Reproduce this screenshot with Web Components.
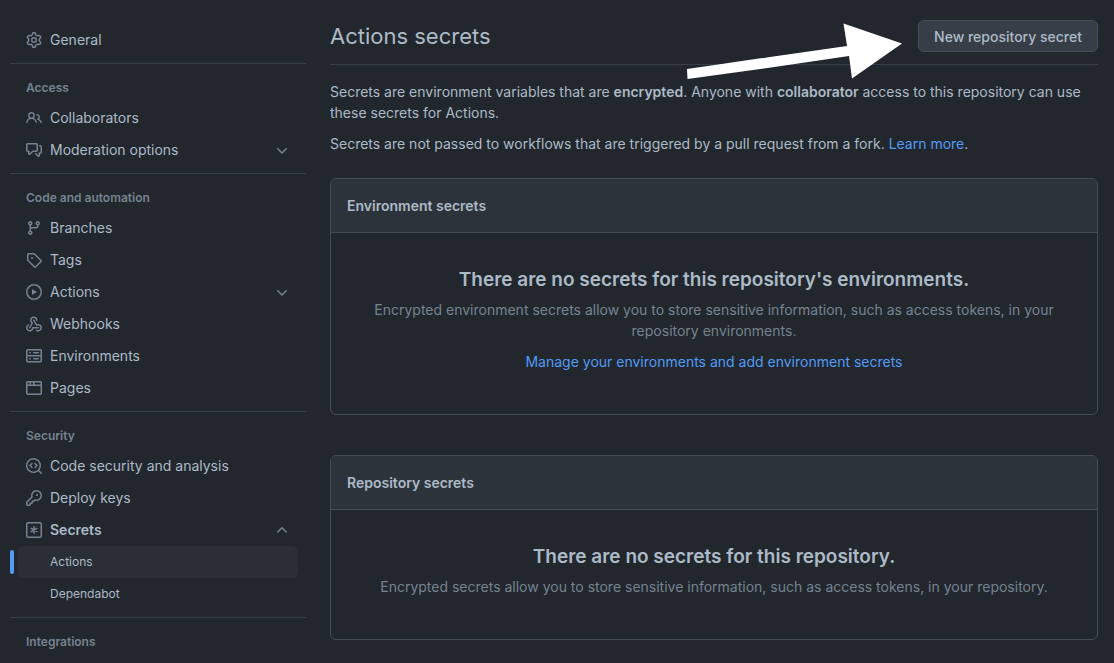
<!DOCTYPE html>
<html lang="en">
<head>
<meta charset="utf-8">
<meta name="viewport" content="width=device-width, initial-scale=1">
<title>Actions secrets</title>
<style>
  :root {
    --canvas: #22272e;
    --subtle: #2d333b;
    --selected: #2a2f37;
    --button: #373e47;
    --fg: #adbac7;
    --muted: #768390;
    --accent: #539bf5;
    --border: #444c56;
    --border-muted: #373e47;
  }
  body {
    margin: 0;
    background: var(--canvas);
    color: var(--fg);
    font: 14px/21px Inter, "Liberation Sans", sans-serif;
  }
</style>
</head>
<body>
<settings-page></settings-page>

<script>
const ICONS = {
  gear: '<path d="M8 0a8.2 8.2 0 0 1 .701.031C9.444.095 9.99.645 10.16 1.29l.288 1.107c.018.066.079.158.212.224.231.114.454.243.668.386.123.082.233.09.299.071l1.103-.303c.644-.176 1.392.021 1.82.63.27.385.506.792.704 1.218.315.675.111 1.422-.364 1.891l-.814.806c-.049.048-.098.147-.088.294.016.257.016.515 0 .772-.01.147.038.246.088.294l.814.806c.475.469.679 1.216.364 1.891a7.977 7.977 0 0 1-.704 1.217c-.428.61-1.176.807-1.82.63l-1.102-.302c-.067-.019-.177-.011-.3.071a5.909 5.909 0 0 1-.668.386c-.133.066-.194.158-.211.224l-.29 1.106c-.168.646-.715 1.196-1.458 1.26a8.006 8.006 0 0 1-1.402 0c-.743-.064-1.289-.614-1.458-1.26l-.289-1.106c-.018-.066-.079-.158-.212-.224a5.738 5.738 0 0 1-.668-.386c-.123-.082-.233-.09-.299-.071l-1.103.303c-.644.176-1.392-.021-1.82-.63a8.12 8.12 0 0 1-.704-1.218c-.315-.675-.111-1.422.363-1.891l.815-.806c.05-.048.098-.147.088-.294a6.214 6.214 0 0 1 0-.772c.01-.147-.038-.246-.088-.294l-.815-.806C.635 6.045.431 5.298.746 4.623a7.92 7.92 0 0 1 .704-1.217c.428-.61 1.176-.807 1.82-.63l1.102.302c.067.019.177.011.3-.071.214-.143.437-.272.668-.386.133-.066.194-.158.211-.224l.29-1.106C6.009.645 6.556.095 7.299.03 7.53.01 7.764 0 8 0Zm-.571 1.525c-.036.003-.108.036-.137.146l-.289 1.105c-.147.561-.549.967-.998 1.189-.173.086-.34.183-.5.29-.417.278-.97.423-1.529.27l-1.103-.303c-.109-.03-.175.016-.195.045-.22.312-.412.644-.573.99-.014.031-.021.11.059.19l.815.806c.411.406.562.957.53 1.456a4.709 4.709 0 0 0 0 .582c.032.499-.119 1.05-.53 1.456l-.815.806c-.081.08-.073.159-.059.19.162.346.353.677.573.989.02.03.085.076.195.046l1.102-.303c.56-.153 1.113-.008 1.53.27.161.107.328.204.501.29.447.222.85.629.997 1.189l.289 1.105c.029.109.101.143.137.146a6.6 6.6 0 0 0 1.142 0c.036-.003.108-.036.137-.146l.289-1.105c.147-.561.549-.967.998-1.189.173-.086.34-.183.5-.29.417-.278.97-.423 1.529-.27l1.103.303c.109.029.175-.016.195-.045.22-.313.411-.644.573-.99.014-.031.021-.11-.059-.19l-.815-.806c-.411-.406-.562-.957-.53-1.456a4.709 4.709 0 0 0 0-.582c-.032-.499.119-1.05.53-1.456l.815-.806c.081-.08.073-.159.059-.19a6.464 6.464 0 0 0-.573-.989c-.02-.03-.085-.076-.195-.046l-1.102.303c-.56.153-1.113.008-1.53-.27a4.44 4.44 0 0 0-.501-.29c-.447-.222-.85-.629-.997-1.189l-.289-1.105c-.029-.11-.101-.143-.137-.146a6.6 6.6 0 0 0-1.142 0ZM11 8a3 3 0 1 1-6 0 3 3 0 0 1 6 0ZM9.5 8a1.5 1.5 0 1 0-3.001.001A1.5 1.5 0 0 0 9.5 8Z"/>',
  people: '<path d="M2 5.5a3.5 3.5 0 1 1 5.898 2.549 5.508 5.508 0 0 1 3.034 4.084.75.75 0 1 1-1.482.235 4 4 0 0 0-7.9 0 .75.75 0 0 1-1.482-.236A5.507 5.507 0 0 1 3.102 8.05 3.493 3.493 0 0 1 2 5.5ZM11 4a3.001 3.001 0 0 1 2.22 5.018 5.01 5.01 0 0 1 2.56 3.012.749.749 0 0 1-.885.954.752.752 0 0 1-.549-.514 3.507 3.507 0 0 0-2.522-2.372.75.75 0 0 1-.574-.73v-.352a.75.75 0 0 1 .416-.672A1.5 1.5 0 0 0 11 5.5.75.75 0 0 1 11 4Zm-5.5-.5a2 2 0 1 0-.001 3.999A2 2 0 0 0 5.5 3.5Z"/>',
  discussion: '<path d="M1.75 1h8.5c.966 0 1.75.784 1.75 1.75v5.5A1.75 1.75 0 0 1 10.25 10H7.061l-2.574 2.573A1.458 1.458 0 0 1 2 11.543V10h-.25A1.75 1.75 0 0 1 0 8.25v-5.5C0 1.784.784 1 1.75 1ZM1.5 2.75v5.5c0 .138.112.25.25.25h1a.75.75 0 0 1 .75.75v2.19l2.72-2.72a.749.749 0 0 1 .53-.22h3.5a.25.25 0 0 0 .25-.25v-5.5a.25.25 0 0 0-.25-.25h-8.5a.25.25 0 0 0-.25.25Zm13 2a.25.25 0 0 0-.25-.25h-.5a.75.75 0 0 1 0-1.5h.5c.966 0 1.75.784 1.75 1.75v5.5A1.75 1.75 0 0 1 14.25 12H14v1.543a1.458 1.458 0 0 1-2.487 1.03L9.22 12.28a.749.749 0 0 1 1.06-1.06l2.22 2.22v-2.19a.75.75 0 0 1 .75-.75h1a.25.25 0 0 0 .25-.25Z"/>',
  branch: '<path d="M9.5 3.25a2.25 2.25 0 1 1 3 2.122V6A2.5 2.5 0 0 1 10 8.5H6a1 1 0 0 0-1 1v1.128a2.251 2.251 0 1 1-1.5 0V5.372a2.25 2.25 0 1 1 1.5 0v1.836A2.493 2.493 0 0 1 6 7h4a1 1 0 0 0 1-1v-.628A2.25 2.25 0 0 1 9.5 3.25Zm-6 0a.75.75 0 1 0 1.5 0 .75.75 0 0 0-1.5 0Zm8.25-.75a.75.75 0 1 0 0 1.5.75.75 0 0 0 0-1.5ZM4.25 12a.75.75 0 1 0 0 1.5.75.75 0 0 0 0-1.5Z"/>',
  tag: '<path d="M1 7.775V2.75C1 1.784 1.784 1 2.75 1h5.025c.464 0 .91.184 1.238.513l6.25 6.25a1.75 1.75 0 0 1 0 2.474l-5.026 5.026a1.75 1.75 0 0 1-2.474 0l-6.25-6.25A1.752 1.752 0 0 1 1 7.775Zm1.5 0c0 .066.026.13.073.177l6.25 6.25a.25.25 0 0 0 .354 0l5.025-5.025a.25.25 0 0 0 0-.354l-6.25-6.25a.25.25 0 0 0-.177-.073H2.75a.25.25 0 0 0-.25.25ZM6 5a1 1 0 1 1 0 2 1 1 0 0 1 0-2Z"/>',
  play: '<path d="M8 0a8 8 0 1 1 0 16A8 8 0 0 1 8 0ZM1.5 8a6.5 6.5 0 1 0 13 0 6.5 6.5 0 0 0-13 0Zm4.879-2.773 4.264 2.559a.25.25 0 0 1 0 .428l-4.264 2.559A.25.25 0 0 1 6 10.559V5.442a.25.25 0 0 1 .379-.215Z"/>',
  webhook: '<path d="M5.5 4.25a2.25 2.25 0 0 1 4.5 0 .75.75 0 0 0 1.5 0 3.75 3.75 0 1 0-6.14 2.889l-2.272 4.258a.75.75 0 0 0 1.324.706L7 7.25a.75.75 0 0 0-.309-1.015A2.25 2.25 0 0 1 5.5 4.25Z"/><path d="M7.364 3.607a.75.75 0 0 1 1.03.257l2.608 4.349a3.75 3.75 0 1 1-.628 6.785.75.75 0 0 1 .752-1.299 2.25 2.25 0 1 0-.033-3.88.75.75 0 0 1-1.03-.256L7.107 4.636a.75.75 0 0 1 .257-1.03Z"/><path d="M2.9 8.776A.75.75 0 0 1 2.625 9.8 2.25 2.25 0 1 0 6 11.75a.75.75 0 0 1 .75-.751h5.5a.75.75 0 0 1 0 1.5H7.425a3.751 3.751 0 1 1-5.55-3.998.75.75 0 0 1 1.024.274Z"/>',
  server: '<path d="M1.75 1h12.5c.966 0 1.75.784 1.75 1.75v4c0 .372-.116.717-.314 1 .198.283.314.628.314 1v4a1.75 1.75 0 0 1-1.75 1.75H1.75A1.75 1.75 0 0 1 0 12.75v-4c0-.358.109-.707.314-1a1.739 1.739 0 0 1-.314-1v-4C0 1.784.784 1 1.75 1ZM1.5 2.75v4c0 .138.112.25.25.25h12.5a.25.25 0 0 0 .25-.25v-4a.25.25 0 0 0-.25-.25H1.75a.25.25 0 0 0-.25.25Zm.25 5.75a.25.25 0 0 0-.25.25v4c0 .138.112.25.25.25h12.5a.25.25 0 0 0 .25-.25v-4a.25.25 0 0 0-.25-.25ZM7 4.75A.75.75 0 0 1 7.75 4h4.5a.75.75 0 0 1 0 1.5h-4.5A.75.75 0 0 1 7 4.75ZM7.75 10h4.5a.75.75 0 0 1 0 1.5h-4.5a.75.75 0 0 1 0-1.5ZM3 4.75A.75.75 0 0 1 3.75 4h.5a.75.75 0 0 1 0 1.5h-.5A.75.75 0 0 1 3 4.75ZM3.75 10h.5a.75.75 0 0 1 0 1.5h-.5a.75.75 0 0 1 0-1.5Z"/>',
  browser: '<path d="M0 2.75C0 1.784.784 1 1.75 1h12.5c.966 0 1.75.784 1.75 1.75v10.5A1.75 1.75 0 0 1 14.25 15H1.75A1.75 1.75 0 0 1 0 13.25ZM14.5 6h-13v7.25c0 .138.112.25.25.25h12.5a.25.25 0 0 0 .25-.25Zm-6-3.5v2h6V2.75a.25.25 0 0 0-.25-.25ZM5 2.5v2h2v-2Zm-3.25 0a.25.25 0 0 0-.25.25V4.5h2v-2Z"/>',
  codescan: '<path d="M8.47 4.97a.75.75 0 0 0 0 1.06L9.94 7.5 8.47 8.97a.75.75 0 1 0 1.06 1.06l2-2a.75.75 0 0 0 0-1.06l-2-2a.75.75 0 0 0-1.06 0ZM6.53 6.03a.75.75 0 0 0-1.06-1.06l-2 2a.75.75 0 0 0 0 1.06l2 2a.75.75 0 1 0 1.06-1.06L5.06 7.5l1.47-1.47Z"/><path d="M12.246 13.307a7.5 7.5 0 1 1 1.06-1.06l2.474 2.473a.75.75 0 1 1-1.06 1.06ZM1.5 7.5a6.002 6.002 0 0 0 3.608 5.504 6.002 6.002 0 0 0 6.486-1.117.748.748 0 0 1 .292-.293A6 6 0 1 0 1.5 7.5Z"/>',
  key: '<path d="M6.5 5.5a4 4 0 112.731 3.795.75.75 0 00-.768.18L7.44 10.5H6.25a.75.75 0 00-.75.75v1.19l-.06.06H4.25a.75.75 0 00-.75.75v1.19l-.06.06H1.75a.25.25 0 01-.25-.25v-1.69l5.024-5.023a.75.75 0 00.181-.768A3.995 3.995 0 016.5 5.5zm4-5.5a5.5 5.5 0 00-5.348 6.788L.22 11.72a.75.75 0 00-.22.53v2C0 15.216.784 16 1.75 16h2a.75.75 0 00.53-.22l.5-.5a.75.75 0 00.22-.53V14h.75a.75.75 0 00.53-.22l.5-.5a.75.75 0 00.22-.53V12h.75a.75.75 0 00.53-.22l.932-.932A5.5 5.5 0 1010.5 0zm.5 6a1 1 0 100-2 1 1 0 000 2z"/>',
  asterisk: '<g fill="none" stroke="currentColor" stroke-width="1.5" stroke-linecap="round"><rect x=".75" y=".75" width="14.5" height="14.5" rx="1.25"/><path d="M8 4.75v6.5M5.2 6.4l5.6 3.2M10.8 6.4l-5.6 3.2"/></g>',
  down: '<path d="M12.78 6.22a.749.749 0 0 1 0 1.06l-4.25 4.25a.749.749 0 0 1-1.06 0L3.22 7.28a.749.749 0 1 1 1.06-1.06L8 9.939l3.72-3.719a.749.749 0 0 1 1.06 0Z"/>',
  up: '<path d="M3.22 10.53a.749.749 0 0 1 0-1.06l4.25-4.25a.749.749 0 0 1 1.06 0l4.25 4.25a.749.749 0 1 1-1.06 1.06L8 6.811 4.28 10.53a.749.749 0 0 1-1.06 0Z"/>'
};

const define = (name, html, setup) => {
  const template = document.createElement('template');
  template.innerHTML = html;
  customElements.define(name, class extends HTMLElement {
    constructor() {
      super();
      this.attachShadow({ mode: 'open' }).append(template.content.cloneNode(true));
    }
    connectedCallback() { if (setup) setup(this, this.shadowRoot); }
  });
};

define('oct-icon', `
  <style>
    :host { display: block; flex: none; width: 16px; height: 16px; }
    svg { display: block; width: 100%; height: 100%; fill: currentColor; overflow: visible; }
  </style>
  <svg viewBox="0 0 16 16" aria-hidden="true"></svg>`,
  (host, root) => { root.querySelector('svg').innerHTML = ICONS[host.getAttribute('name')] || ''; });

/* One row of the navigation; "sub" rows are indented under an expanded row. */
define('nav-item', `
  <style>
    :host { display: block; padding: 0 8px; }
    a, button {
      box-sizing: border-box; width: 100%; height: 32px; padding: 0 8px;
      display: flex; align-items: center; gap: 8px;
      border: 0; border-radius: 6px; background: none;
      color: var(--fg); font: inherit; line-height: 20px; text-align: left; text-decoration: none;
      position: relative; cursor: pointer;
    }
    .label { flex: 1; }
    .lead, .chevron { color: var(--muted); }
    :host([strong]) .label { font-weight: 600; }
    :host([sub]) a { padding-left: 32px; font-size: 12px; }
    :host([current]) a { background: var(--selected); }
    :host([current]) a::before {
      content: ""; position: absolute; left: -8px; top: 4px;
      width: 4px; height: 24px; border-radius: 6px; background: var(--accent);
    }
  </style>`,
  (host, root) => {
    if (root.querySelector('.label')) return;
    const chevron = host.getAttribute('chevron');
    const icon = host.getAttribute('icon');
    const row = document.createElement(chevron ? 'button' : 'a');
    if (chevron) {
      row.type = 'button';
      row.setAttribute('aria-expanded', chevron === 'up');
    } else {
      row.href = '#';
      if (host.hasAttribute('current')) row.setAttribute('aria-current', 'page');
    }
    row.innerHTML =
      (icon ? `<oct-icon class="lead" name="${icon}"></oct-icon>` : '') +
      '<span class="label"><slot></slot></span>' +
      (chevron ? `<oct-icon class="chevron" name="${chevron}"></oct-icon>` : '');
    root.append(row);
  });

define('nav-group', `
  <style>
    :host { display: block; margin-top: 7px; padding-top: 8px; border-top: 1px solid var(--border-muted); }
    h3 { margin: 0; padding: 2px 16px 0; font-size: 12px; line-height: 28px; font-weight: 600; color: var(--muted); }
  </style>
  <h3></h3>
  <slot></slot>`,
  (host, root) => { root.querySelector('h3').textContent = host.getAttribute('heading'); });

define('settings-nav', `
  <style>
    :host { display: block; padding-top: 24px; }
  </style>
  <nav aria-label="Repository settings">
    <nav-item icon="gear">General</nav-item>
    <nav-group heading="Access">
      <nav-item icon="people">Collaborators</nav-item>
      <nav-item icon="discussion" chevron="down">Moderation options</nav-item>
    </nav-group>
    <nav-group heading="Code and automation">
      <nav-item icon="branch">Branches</nav-item>
      <nav-item icon="tag">Tags</nav-item>
      <nav-item icon="play" chevron="down">Actions</nav-item>
      <nav-item icon="webhook">Webhooks</nav-item>
      <nav-item icon="server">Environments</nav-item>
      <nav-item icon="browser">Pages</nav-item>
    </nav-group>
    <nav-group heading="Security">
      <nav-item icon="codescan">Code security and analysis</nav-item>
      <nav-item icon="key">Deploy keys</nav-item>
      <nav-item icon="asterisk" chevron="up" strong>Secrets</nav-item>
      <nav-item sub current>Actions</nav-item>
      <nav-item sub>Dependabot</nav-item>
    </nav-group>
    <nav-group heading="Integrations"></nav-group>
  </nav>`);

define('page-header', `
  <style>
    :host {
      display: flex; justify-content: space-between; align-items: center; gap: 16px;
      padding: 20px 0 12px; border-bottom: 1px solid var(--border-muted); position: relative;
    }
    h2 { margin: 0; font-size: 22px; line-height: 30px; font-weight: 400; }
    button {
      height: 32px; padding: 0 15px; border: 1px solid var(--border); border-radius: 6px;
      background: var(--button); color: var(--fg); font: inherit; font-weight: 500;
      white-space: nowrap; cursor: pointer;
    }
    .pointer { position: absolute; right: 195px; top: 23px; width: 217px; height: 57px; fill: #fff; }
  </style>
  <h2><slot></slot></h2>
  <button type="button">New repository secret</button>
  <svg class="pointer" viewBox="0 0 217 57" aria-hidden="true">
    <path d="M1 46 L84 34 L161 23 L157.500 .5 L216 20.500 L166 55.500 L163 33 L85 44.500 L1.500 56 Z"/>
  </svg>`);

define('secret-box', `
  <style>
    :host { display: block; border: 1px solid var(--border); border-radius: 6px; overflow: hidden; }
    header { padding: 16px; background: var(--subtle); border-bottom: 1px solid var(--border); }
    h3 { margin: 0; font-size: 14px; line-height: 21px; font-weight: 600; }
    .body { padding: 32px 32px 42px; text-align: center; }
    h4 { margin: 0 0 4px; font-size: 19px; line-height: 30px; font-weight: 600; }
  </style>
  <header><h3></h3></header>
  <div class="body"><h4></h4><slot></slot></div>`,
  (host, root) => {
    root.querySelector('h3').textContent = host.getAttribute('heading');
    root.querySelector('h4').textContent = host.getAttribute('blank');
  });

define('settings-page', `
  <style>
    :host {
      display: grid; grid-template-columns: 296px minmax(0, 1fr); gap: 24px;
      padding: 0 16px 0 10px;
    }
    main { padding-bottom: 16px; }
    p { margin: 0; }
    p + p { margin-top: 10px; }
    .intro { padding: 16px 0 24px; }
    .hint { color: var(--muted); }
    strong { font-weight: 600; }
    a { color: var(--accent); text-decoration: none; }
    secret-box + secret-box { margin-top: 40px; }
  </style>
  <settings-nav></settings-nav>
  <main>
    <page-header>Actions secrets</page-header>
    <div class="intro">
      <p>Secrets are environment variables that are <strong>encrypted</strong>. Anyone with <strong>collaborator</strong> access to this repository can use these secrets for Actions.</p>
      <p>Secrets are not passed to workflows that are triggered by a pull request from a fork. <a href="#">Learn more</a>.</p>
    </div>
    <secret-box heading="Environment secrets" blank="There are no secrets for this repository's environments.">
      <p class="hint">Encrypted environment secrets allow you to store sensitive information, such as access tokens, in your repository environments.</p>
      <p><a href="#">Manage your environments and add environment secrets</a></p>
    </secret-box>
    <secret-box heading="Repository secrets" blank="There are no secrets for this repository.">
      <p class="hint">Encrypted secrets allow you to store sensitive information, such as access tokens, in your repository.</p>
    </secret-box>
  </main>`);
</script>
</body>
</html>
